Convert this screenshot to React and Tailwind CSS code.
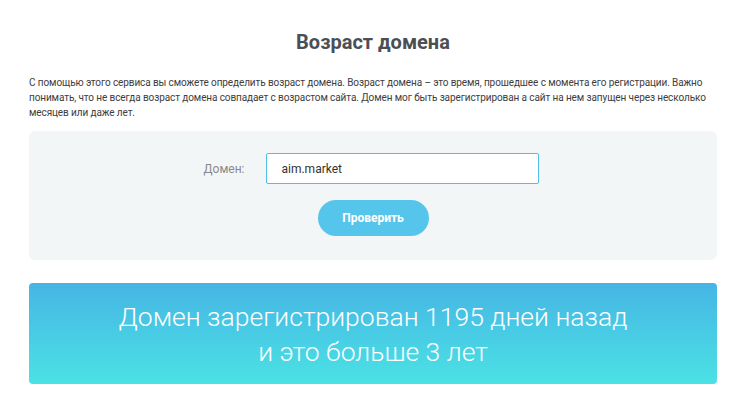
export default function App() {
  return (
    <div className="min-h-[400px] bg-white font-['Roboto','Noto_Sans',sans-serif]">
      <div className="ml-[29px] w-[688px] pt-[29px]">
        <h1 className="text-center text-[20px] leading-[26px] font-bold text-[#4b4f54]">
          Возраст домена
        </h1>
        <p className="mt-[20px] text-[10px] leading-[15px] text-[#3d3d3d] tracking-[-0.1px]">
          С помощью этого сервиса вы сможете определить возраст домена. Возраст домена – это время, прошедшее с момента его регистрации. Важно
          <br />
          понимать, что не всегда возраст домена совпадает с возрастом сайта. Домен мог быть зарегистрирован а сайт на нем запущен через несколько
          <br />
          месяцев или даже лет.
        </p>

        <div className="mt-[11px] rounded-md bg-[#f3f6f7] pt-[22px] pb-[24px]">
          <div className="flex items-center justify-center gap-[22px] pr-[3px]">
            <label className="text-[12px] text-[#8a8a8a]">Домен:</label>
            <input
              defaultValue="aim.market"
              className="h-[31px] w-[273px] rounded-[2px] border border-[#4fbfe6] bg-white pl-[14px] text-[12px] text-[#333] outline-none"
            />
          </div>
          <div className="mt-[16px] flex justify-center">
            <button className="h-[36px] w-[111px] rounded-full bg-[#56c5ec] text-[12px] font-bold text-white">
              Проверить
            </button>
          </div>
        </div>

        <div className="mt-[23px] rounded-[4px] bg-gradient-to-b from-[#46b5e4] to-[#4be2e4] pt-[16px] pb-[15px] text-center text-[26.5px] leading-[35px] font-light text-white">
          Домен зарегистрирован 1195 дней назад
          <br />
          и это больше 3 лет
        </div>
      </div>
    </div>
  )
}
